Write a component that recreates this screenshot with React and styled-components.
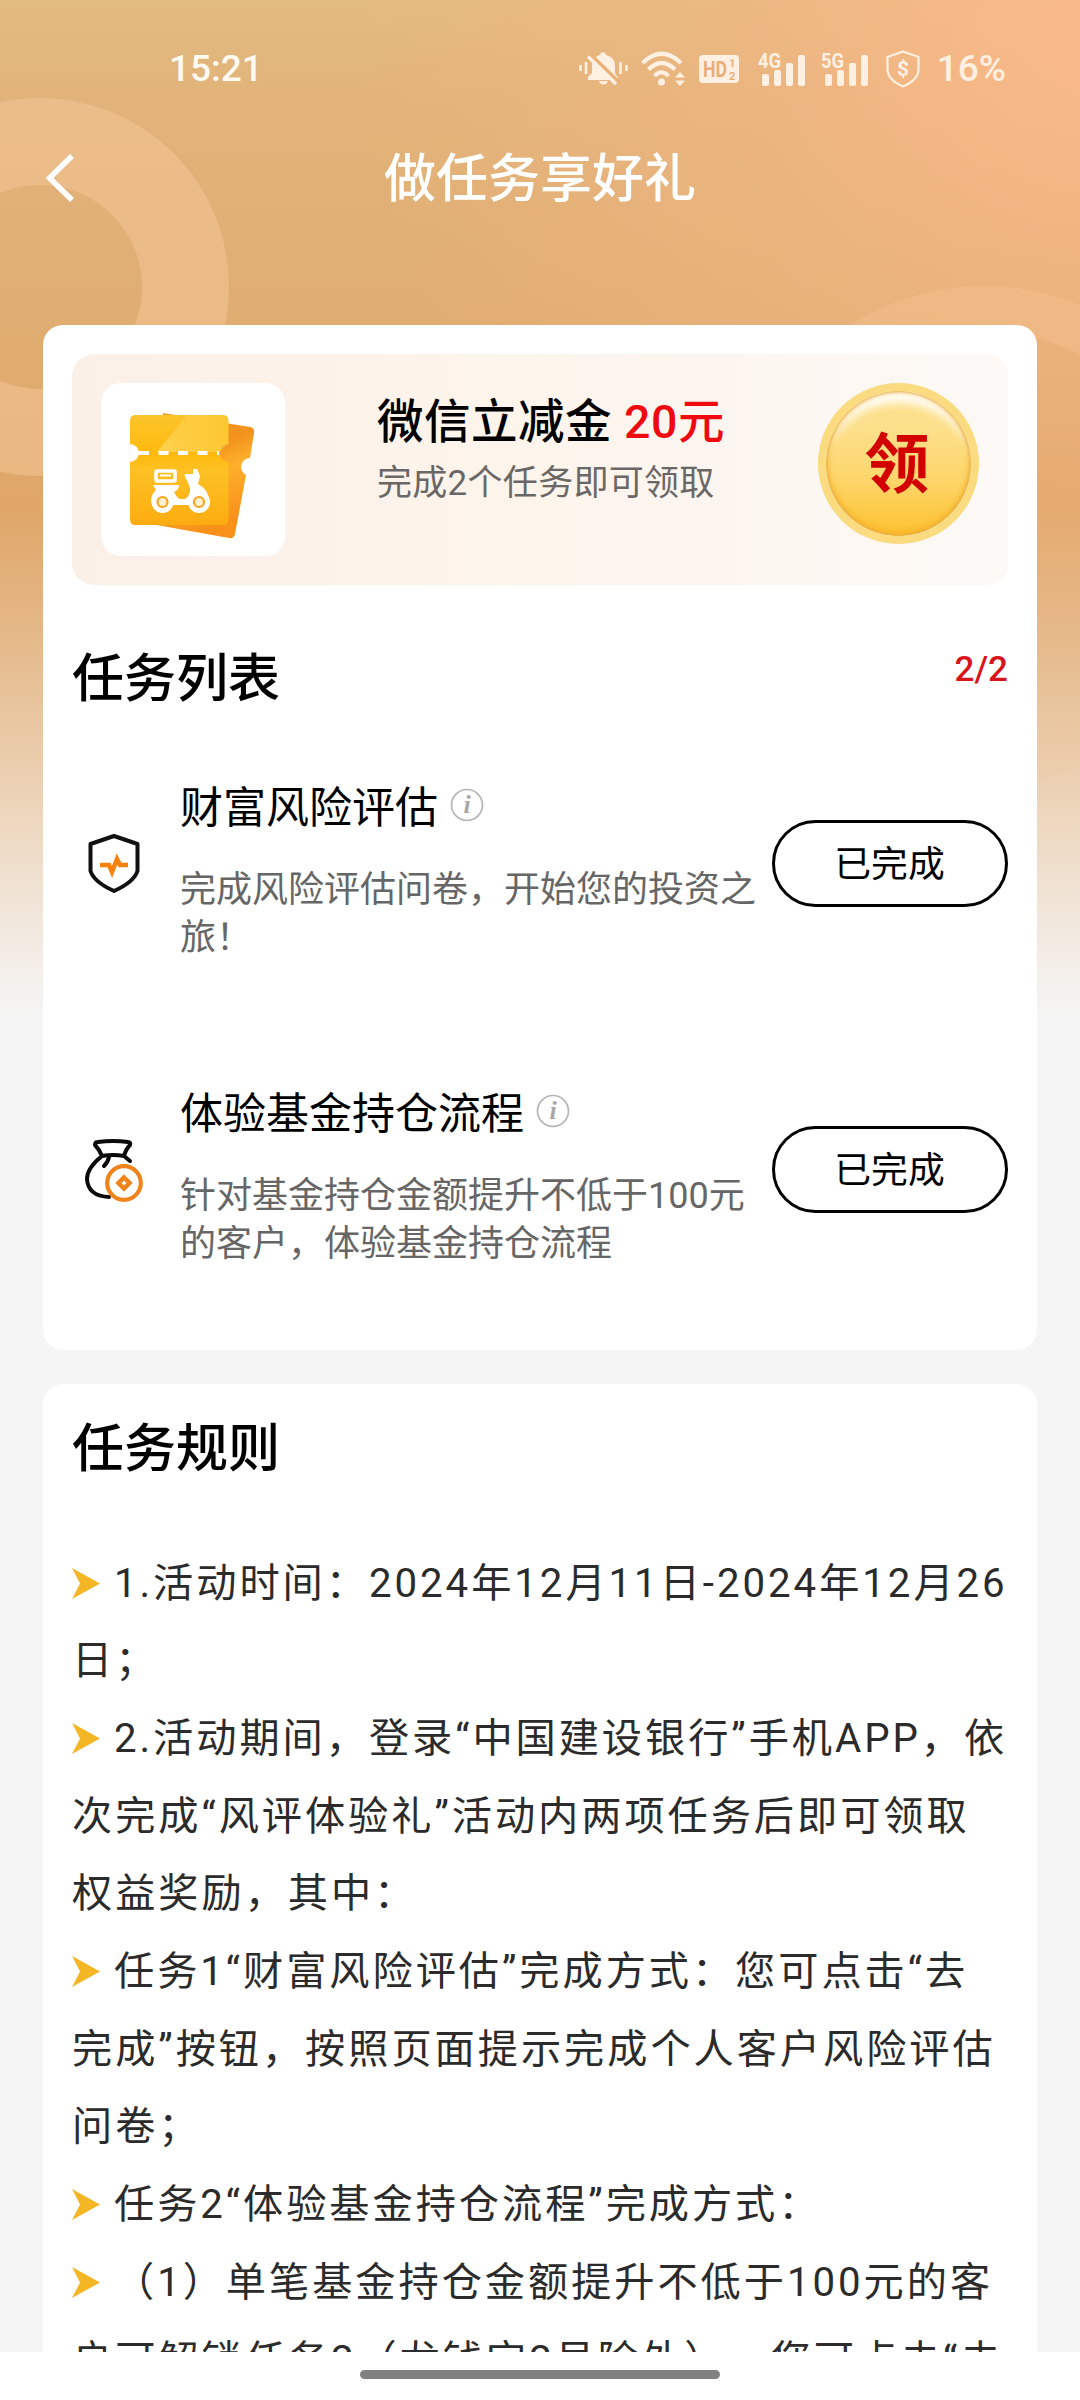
import React from 'react';
import styled, { createGlobalStyle } from 'styled-components';

const GlobalStyle = createGlobalStyle`
  body {
    margin:0;
    background:#fff;
    font-family:Roboto, 'Noto Sans CJK SC', sans-serif;
    text-spacing-trim:space-all;
  }
  h1, h2, h3, p {
    margin:0;
    font-weight:400;
  }
`;
const Screen = styled.div`
  position:relative;
  width:1080px;
  height:2400px;
  overflow:hidden;
  display:flex;
  flex-direction:column;
`;
const Backdrop = styled.div`
  position:absolute;
  top:0;
  left:0;
  width:1080px;
  height:2352px;
  background:
    linear-gradient(180deg, rgba(245,245,245,0) 510px, rgba(245,245,245,.22) 640px, rgba(245,245,245,.42) 740px, rgba(245,245,245,.62) 830px, rgba(245,245,245,.88) 950px, #f5f5f5 1015px),
    radial-gradient(ellipse 760px 640px at 1110px 30px, #fbb98a 0%, rgba(243,182,132,.6) 45%, rgba(243,182,132,0) 100%),
    linear-gradient(180deg, #e2bb80 0, #e1b37a 100px, #e0ae73 300px, #dfa668 500px, #e1aa6e 700px);
`;
const Rings = styled.svg`
  position:absolute;
  top:0;
  left:0;
`;
const StatusBar = styled.div`
  position:relative;
  height:134px;
  box-sizing:border-box;
  padding:3px 74px 0 169px;
  display:flex;
  align-items:center;
  justify-content:space-between;
`;
const Clock = styled.span`
  color:#fffaf0;
  font-size:37px;
  font-weight:500;
`;
const StatusIcons = styled.div`
  display:flex;
  align-items:center;
  gap:13px;
  color:#fff0e1;
`;
const SignalGroup = styled.div`
  display:flex;
  gap:15px;
  margin:0 4px 0 6px;
`;
const Battery = styled.span`
  font-size:37px;
  font-weight:500;
  margin-left:4px;
`;
const Header = styled.header`
  position:relative;
  height:88px;
  margin-bottom:103px;
  display:grid;
  grid-template-columns:120px 1fr 120px;
  align-items:center;
`;
const BackIcon = styled.svg`
  margin-left:44px;
  margin-bottom:2px;
`;
const PageTitle = styled.h1`
  color:#fff;
  font-size:52px;
  font-weight:500;
  line-height:88px;
  padding-top:2px;
  text-align:center;
`;
const Content = styled.main`
  position:relative;
  height:2027px;
  overflow:hidden;
  padding:0 43px;
  display:flex;
  flex-direction:column;
  gap:34px;
`;
const Card = styled.section`
  box-sizing:border-box;
  flex:none;
  height:${props => props.$height}px;
  background:#fff;
  border-radius:20px;
  padding:29px 29px 0;
`;
const Banner = styled.article`
  box-sizing:border-box;
  height:231px;
  border-radius:22px;
  padding:29px;
  display:flex;
  align-items:flex-start;
  background:linear-gradient(90deg, #fbf0e8, #fdf4ec 50%, #fcf9f6);
`;
const GiftTile = styled.div`
  width:184px;
  height:173px;
  border-radius:20px;
  background:#fff;
`;
const GiftText = styled.div`
  flex:1;
  padding-left:92px;
`;
const GiftName = styled.h3`
  font-size:46.5px;
  font-weight:500;
  letter-spacing:.5px;
  line-height:62px;
  padding-top:8px;
  white-space:pre;
`;
const Amount = styled.span`
  color:#ee0a10;
`;
const GiftNote = styled.p`
  color:#6a6866;
  font-size:35px;
  letter-spacing:.3px;
  line-height:50px;
  padding-top:6px;
`;
const Coin = styled.div`
  width:161px;
  height:161px;
  box-sizing:border-box;
  border:8px solid #fadb80;
  border-radius:50%;
  display:flex;
  align-items:center;
  justify-content:center;
  padding:3px 3px 0 0;
  color:#d20000;
  font-size:65px;
  font-weight:700;
  line-height:1;
  background:linear-gradient(180deg, #fde08c 25%, #fdd66c 60%, #fdc230 100%);
  background-clip:padding-box;
  box-shadow:
    inset 0 0 3px 1px #e8b04a,
    inset 0 -2px 8px #f2ab22,
    inset 0 19px 8px -7px #fffdf8;
`;
const ListHead = styled.div`
  display:flex;
  justify-content:space-between;
  padding-top:49px;
  height:135px;
`;
const SectionTitle = styled.h2`
  font-size:52px;
  font-weight:500;
  line-height:${props => props.$line}px;
`;
const Progress = styled.span`
  color:#d9141c;
  font-size:35px;
  font-weight:500;
  line-height:70px;
  padding-top:1px;
`;
const Task = styled.article`
  height:256px;
  margin-bottom:50px;
  display:grid;
  grid-template-columns:108px 1fr 236px;
  align-items:center;
`;
const TaskIcon = styled.svg`
  margin-left:10px;
  margin-bottom:66px;
`;
const TaskBody = styled.div`
  align-self:start;
  padding-top:9px;
`;
const TaskName = styled.h3`
  display:flex;
  align-items:center;
  gap:12px;
  font-size:43px;
  line-height:60px;
`;
const TaskNote = styled.p`
  color:#666;
  font-size:36px;
  line-height:48px;
  padding-top:28px;
  white-space:pre;
`;
const DoneButton = styled.button`
  box-sizing:border-box;
  width:236px;
  height:87px;
  margin-bottom:67px;
  padding:0 1px 5px 0;
  border:3px solid #000;
  border-radius:44px;
  background:#fff;
  color:#000;
  font-family:inherit;
  font-size:36.8px;
`;
const Rules = styled.div`
  padding-top:57.5px;
  color:#2b2b2b;
  font-size:40.2px;
  letter-spacing:2.97px;
  line-height:77.7px;
  white-space:pre;
`;
const Line = styled.p`
  display:flex;
  align-items:center;
`;
const Arrow = styled.svg`
  flex:none;
  margin-right:14px;
`;
const Info = styled.svg`
  margin-bottom:6px;
`;
const HomeBar = styled.footer`
  position:relative;
  height:48px;
  background:#fff;
  display:flex;
  justify-content:center;
  align-items:center;
`;
const HomePill = styled.div`
  width:360px;
  height:9px;
  border-radius:5px;
  background:#808080;
  margin-bottom:3px;
`;

function BellOff () {
  return (
    <svg width="49" height="36" viewBox="0 0 49 36" fill="currentColor">
      <path d="M9 29V26L13 22V14Q13 6 21 4L22 1.500H26L27 4Q36 6 36 15V22L39 27V29Z"/>
      <path d="M20 30H29Q28 33.500 24.500 33.500Q21 33.500 20 30Z"/>
      <path d="M11 3L40 31" stroke="#e9b07a" strokeWidth="3.500"/>
      <path d="M9 5.500L37 33" stroke="currentColor" strokeWidth="3.200"/>
      <path d="M1.500 14V20M7 11V23M41.500 11V23M47.500 14V20" stroke="currentColor" strokeWidth="2.600" fill="none"/>
    </svg>
  );
}
function Wifi () {
  return (
    <svg width="45" height="36" viewBox="0 0 45 36" fill="none" stroke="currentColor" strokeWidth="4.200">
      <path d="M1.500 12Q20.500 -6.500 40 12"/>
      <path d="M7.500 18.500Q20.500 5.500 34 18.500"/>
      <path d="M13.500 25Q20.500 17.500 27.500 25"/>
      <circle cx="20.500" cy="31" r="3.500" fill="currentColor" stroke="none"/>
      <path d="M34 26.500L39 21L44 26.500ZM34 29.500L39 35L44 29.500Z" fill="currentColor" stroke="none"/>
    </svg>
  );
}
function HdBadge () {
  return (
    <svg width="40" height="28" viewBox="0 0 40 28" fontWeight="700" fill="#e9ae7a">
      <rect width="40" height="28" rx="4" fill="#fff0e1"/>
      <text x="4" y="22" fontSize="22" textLength="24" lengthAdjust="spacingAndGlyphs">HD</text>
      <text x="30" y="12" fontSize="11">1</text>
      <text x="30" y="25" fontSize="11">2</text>
    </svg>
  );
}
function Signal ({ label }) {
  return (
    <svg width="48" height="42" viewBox="0 -4 48 42" fill="currentColor">
      <text x="0" y="15.500" fontSize="20" fontWeight="700" textLength="23" lengthAdjust="spacingAndGlyphs">{label}</text>
      <rect x="4" y="22" width="7" height="12" rx="2"/>
      <rect x="16" y="18" width="7" height="16" rx="2"/>
      <rect x="28" y="11" width="7" height="23" rx="2"/>
      <rect x="40" y="3" width="7" height="31" rx="2"/>
    </svg>
  );
}
function ShieldMoney () {
  return (
    <svg width="34" height="38" viewBox="0 0 34 38" fill="none" stroke="currentColor" strokeWidth="2.200">
      <path d="M17 1.500L32.500 7V19Q32.500 30 17 36.500Q1.500 30 1.500 19V7Z"/>
      <text x="17" y="26" fontSize="21" fontWeight="700" textAnchor="middle" fill="currentColor" stroke="none">$</text>
    </svg>
  );
}
function GiftIcon () {
  return (
    <svg width="184" height="173" viewBox="0 0 184 173">
      <defs>
        <linearGradient id="front" x1="0" y1="0" x2="0" y2="1">
          <stop offset="0" stopColor="#fcc52c"/>
          <stop offset=".35" stopColor="#feb90c"/>
          <stop offset=".5" stopColor="#fdc125"/>
          <stop offset="1" stopColor="#fdac10"/>
        </linearGradient>
        <linearGradient id="back" x1="0" y1="0" x2=".3" y2="1">
          <stop offset="0" stopColor="#f09a25"/>
          <stop offset=".4" stopColor="#f2921c"/>
          <stop offset=".6" stopColor="#fdb02c"/>
          <stop offset="1" stopColor="#f9901a"/>
        </linearGradient>
        <linearGradient id="shine" x1="1" y1="0" x2="0" y2="1">
          <stop offset="0" stopColor="#ffe07a" stopOpacity=".1"/>
          <stop offset="1" stopColor="#ffe27c" stopOpacity=".6"/>
        </linearGradient>
      </defs>
      <path d="M62 30L149 44Q154 45 153 50L149 75A9 9 0 0 0 145 92L134 151Q133 156 128 155L50 141Z" fill="url(#back)"/>
      <path d="M34 32H122Q127.500 32 127.500 38V61A9 9 0 0 0 127.500 79V136Q127.500 142 122 142H34Q29 142 29 136V79A9 9 0 0 0 29 61V38Q29 32 34 32Z" fill="url(#front)"/>
      <path d="M86 32H122Q127.500 32 127.500 38V61Q121 64 119 69H56Z" fill="url(#shine)"/>
      <path d="M38 70H118" stroke="#fff" strokeWidth="4" strokeDasharray="10 9.500"/>
      <rect x="55" y="88" width="19" height="10" rx="1" fill="none" stroke="#fff" strokeWidth="3.500"/>
      <path d="M59 92.500H70" stroke="#fff" strokeWidth="2"/>
      <path d="M52 102H78Q78 107 73 109Q76 115 79 116H84Q90 112 89 105L86 97Q83 94 84 91H92V86H96L99 93L97 101Q107 106 108 117L98 122H62L50 119Q50 111 55 107Z" fill="#fff"/>
      <circle cx="61.500" cy="119" r="11" fill="#fff"/>
      <circle cx="98" cy="119" r="11" fill="#fff"/>
      <circle cx="61.500" cy="119" r="5" fill="#fff0d0" stroke="#f7a51a" strokeWidth="2.200"/>
      <circle cx="98" cy="119" r="5" fill="#fff0d0" stroke="#f7a51a" strokeWidth="2.200"/>
    </svg>
  );
}
function InfoIcon () {
  return (
    <Info width="34" height="34" viewBox="0 0 34 34">
      <circle cx="17" cy="17" r="15.500" fill="none" stroke="#b5b5b5" strokeWidth="1.700"/>
      <text x="17" y="25" fontSize="26" fontWeight="700" fontStyle="italic" fontFamily="Liberation Serif, serif" textAnchor="middle" fill="#a8a8a8">i</text>
    </Info>
  );
}
function ShieldIcon () {
  return (
    <TaskIcon width="64" height="64" viewBox="0 0 64 64" fill="none" strokeLinejoin="round">
      <path d="M32 4L55.500 12V39Q52 50 32 59Q12 50 8.500 39V12Z" stroke="#111" strokeWidth="4"/>
      <path d="M18 33H27L30 40L35 27L38 33H46" stroke="#f5820d" strokeWidth="4.500" strokeLinejoin="miter"/>
    </TaskIcon>
  );
}
function BagIcon () {
  return (
    <TaskIcon width="64" height="68" viewBox="0 1 64 68" fill="none" strokeLinecap="round" strokeLinejoin="round">
      <path d="M20 21Q17 14 13 10Q13 7 16 7Q31 5 46 7Q49 7 48 10Q44 14 42 21Q31 19 20 21Q5 33 5 44Q6 61 27 62M42 21L48 26" stroke="#0a0a0a" strokeWidth="4"/>
      <path d="M27 22Q26 27 22 31" stroke="#0a0a0a" strokeWidth="4"/>
      <circle cx="42" cy="48" r="16.800" stroke="#f0831c" strokeWidth="4.200"/>
      <path d="M42 42.500L47.500 48L42 53.500L36.500 48Z" stroke="#f0831c" strokeWidth="4.500" strokeLinejoin="miter"/>
    </TaskIcon>
  );
}

const tasks = [
  { name: '财富风险评估', note: '完成风险评估问卷，开始您的投资之\n旅！', Icon: ShieldIcon },
  { name: '体验基金持仓流程', note: '针对基金持仓金额提升不低于100元\n的客户，体验基金持仓流程', Icon: BagIcon },
];
const rules = [
  ['1.活动时间：2024年12月11日-2024年12月26', '日；'],
  ['2.活动期间，登录“中国建设银行”手机APP，依', '次完成“风评体验礼”活动内两项任务后即可领取', '权益奖励，其中：'],
  ['任务1“财富风险评估”完成方式：您可点击“去', '完成”按钮，按照页面提示完成个人客户风险评估', '问卷；'],
  ['任务2“体验基金持仓流程”完成方式：'],
  ['（1）单笔基金持仓金额提升不低于100元的客', '户可解锁任务2（龙钱宝2号除外），您可点击“去'],
];

function App () {
  return (
    <Screen>
      <GlobalStyle/>
      <Backdrop/>
      <Rings width="1080" height="800" fill="none">
        <defs>
          <linearGradient id="ring" x1="0" y1="0" x2="0" y2="1">
            <stop offset="0" stopColor="#f6c393" stopOpacity=".36"/>
            <stop offset="1" stopColor="#f0c39a" stopOpacity=".12"/>
          </linearGradient>
        </defs>
        <circle cx="40" cy="287" r="145.500" stroke="#f6c79a" strokeOpacity=".5" strokeWidth="87"/>
        <circle cx="984" cy="536" r="227.500" stroke="url(#ring)" strokeWidth="45"/>
      </Rings>
      <StatusBar>
        <Clock>15:21</Clock>
        <StatusIcons>
          <BellOff/>
          <Wifi/>
          <HdBadge/>
          <SignalGroup>
            <Signal label="4G"/>
            <Signal label="5G"/>
          </SignalGroup>
          <ShieldMoney/>
          <Battery>16%</Battery>
        </StatusIcons>
      </StatusBar>
      <Header>
        <BackIcon width="34" height="50" viewBox="0 0 34 50" fill="none">
          <path d="M28 3L5.500 25L28 47" stroke="#fff" strokeWidth="5.500"/>
        </BackIcon>
        <PageTitle>做任务享好礼</PageTitle>
      </Header>
      <Content>
        <Card $height={1025}>
          <Banner>
            <GiftTile><GiftIcon/></GiftTile>
            <GiftText>
              <GiftName>微信立减金 <Amount>20元</Amount></GiftName>
              <GiftNote>完成2个任务即可领取</GiftNote>
            </GiftText>
            <Coin>领</Coin>
          </Banner>
          <ListHead>
            <SectionTitle $line={92}>任务列表</SectionTitle>
            <Progress>2/2</Progress>
          </ListHead>
          {tasks.map(({ name, note, Icon }) => (
            <Task key={name}>
              <Icon/>
              <TaskBody>
                <TaskName>{name}<InfoIcon/></TaskName>
                <TaskNote>{note}</TaskNote>
              </TaskBody>
              <DoneButton>已完成</DoneButton>
            </Task>
          ))}
        </Card>
        <Card $height={1100}>
          <SectionTitle $line={74}>任务规则</SectionTitle>
          <Rules>
            {rules.map(lines => lines.map((line, i) => (
              <Line key={line}>
                {i === 0 && (
                  <Arrow width="28" height="31" viewBox="0 0 28 31">
                    <path d="M0 0L28 15.500L0 31L8 15.500Z" fill="#f5b625"/>
                  </Arrow>
                )}
                {line}
              </Line>
            )))}
          </Rules>
        </Card>
      </Content>
      <HomeBar><HomePill/></HomeBar>
    </Screen>
  );
}
export default App;
